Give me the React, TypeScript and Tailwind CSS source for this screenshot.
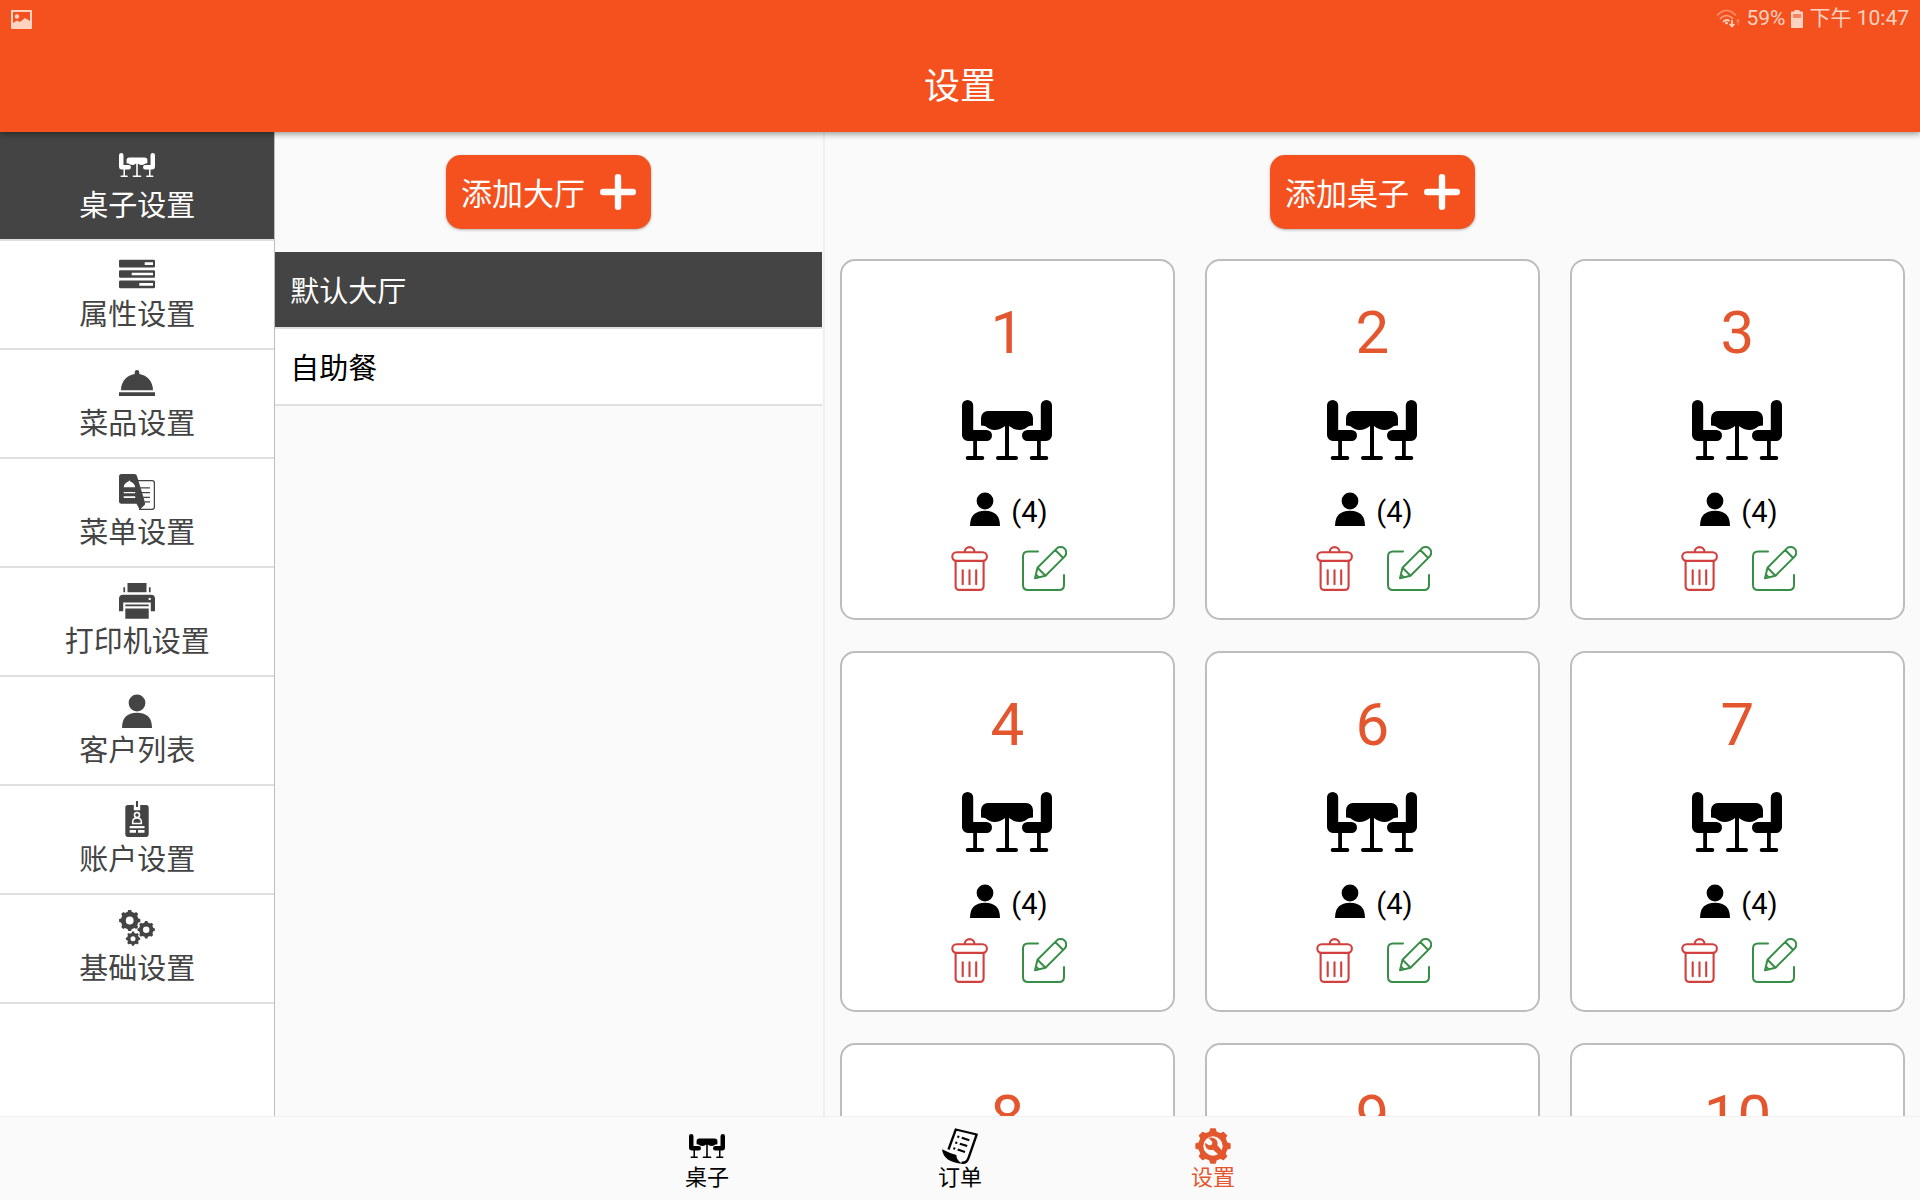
import { memo, useState } from "react";
import type { ReactNode } from "react";
import clsx from "clsx";

interface IconProps {
  className?: string;
}

const TableIcon = ({ className }: IconProps) => (
  <svg viewBox="0 0 90 90" fill="currentColor" className={className} aria-hidden="true">
    <path d="M0 20.5a5.6 5.6 0 0 1 11.2 0V45H24.500a5.500 5.500 0 0 1 0 11H6a6 6 0 0 1-6-6z" />
    <path d="M90 20.500a5.600 5.600 0 0 0-11.200 0V45H65.500a5.500 5.500 0 0 0 0 11H84a6 6 0 0 0 6-6z" />
    <path d="M26 26H64a7 7 0 0 1 7 7v7.500q-2.500 0-4.500.8q-4 3.700-9 3.700q-5.500 0-10.500-4V71h7a2 2 0 0 1 0 4H36a2 2 0 0 1 0-4h7V41q-5 4-10.500 4q-5 0-9-3.700q-2-.8-4.500-.8V33a7 7 0 0 1 7-7z" />
    <path d="M11.200 55h3.800v16h5.300a2 2 0 0 1 0 4H5.700a2 2 0 0 1 0-4h5.500z" />
    <path d="M78.800 55h-3.800v16h-5.300a2 2 0 0 0 0 4h14.600a2 2 0 0 0 0-4h-5.500z" />
  </svg>
);

const PropertyIcon = ({ className }: IconProps) => (
  <svg viewBox="0 0 36 36" fill="currentColor" fillRule="evenodd" className={className} aria-hidden="true">
    <path d="M1.200 3.700H34.800Q36 3.700 36 4.900V10.200Q36 11.400 34.800 11.400H1.200Q0 11.400 0 10.200V4.900Q0 3.700 1.200 3.700zM25.700 6.300V9H34V6.300z" />
    <path d="M1.200 14.200H34.800Q36 14.200 36 15.400V20.600Q36 21.800 34.800 21.800H1.200Q0 21.800 0 20.600V15.400Q0 14.200 1.200 14.200zM12.700 16.700V19.300H34V16.700z" />
    <path d="M1.200 24.600H34.800Q36 24.600 36 25.800V31.100Q36 32.300 34.800 32.300H1.200Q0 32.300 0 31.100V25.800Q0 24.600 1.200 24.600zM20.300 27.100V29.800H34V27.100z" />
  </svg>
);

const DishIcon = ({ className }: IconProps) => (
  <svg viewBox="0 0 36 36" fill="currentColor" className={className} aria-hidden="true">
    <path d="M2 25.300C2 16.500 8 10 15.700 9V7.300a2.300 2.300 0 1 1 4.600 0V9C28 10 34 16.500 34 25.300zM0 27.200H36V31H0z" />
  </svg>
);

const MenuIcon = ({ className }: IconProps) => (
  <svg viewBox="0 0 36 36" fill="currentColor" className={className} aria-hidden="true">
    <path d="M18 6.700H33Q35.400 6.700 35.400 9V33Q35.400 35.400 33 35.400H20M21 13.800H31M22 18.700H31M24 23.300H31M26 27.900H31" fill="none" stroke="currentColor" strokeWidth="1.300" />
    <path d="M2.500 0H15.500Q17.300 0 18 2L26 28.500V30.500L20.800 35.800L17.500 29.800H2.500Q0 29.800 0 27.300V2.500Q0 0 2.500 0z" />
    <path d="M4.700 13.300Q5 9 9.500 7.600Q10.400 5.600 11.300 7.600Q15.600 9 16.200 13.300zM4.700 17.900H16.200V19.300H4.700zM4.700 22.300H16.200V23.900H4.700z" fill="white" />
  </svg>
);

const PrinterIcon = ({ className }: IconProps) => (
  <svg viewBox="0 0 36 36" fill="currentColor" fillRule="evenodd" className={className} aria-hidden="true">
    <path d="M8.500 0H27.500V9.300H8.500zM4.400 4.300H6.100V9.300H4.400zM29.900 4.300H31.600V9.300H29.900z" />
    <path d="M4 11.700H32Q36 11.700 36 15.700V28.300H31.800V19.500H4.200V28.300H0V15.700Q0 11.700 4 11.700zM30.700 14.700a1.200 1.200 0 1 0 .01 0z" />
    <path d="M6.300 21.500H29.700V23.200H6.300zM6.300 25.600H29.700V35.800H6.300z" />
  </svg>
);

const PersonIcon = ({ className }: IconProps) => (
  <svg viewBox="0 0 36 36" fill="currentColor" className={className} aria-hidden="true">
    <circle cx="18" cy="11" r="8.400" />
    <path d="M3 36Q3 20.800 18 20.800T33 36z" />
  </svg>
);

const BadgeIcon = ({ className }: IconProps) => (
  <svg viewBox="0 0 36 36" fill="currentColor" className={className} aria-hidden="true">
    <path d="M9 4H14.800V9.200H21.200V4H27Q29.700 4 29.700 6.700V33Q29.700 36 27 36H9Q6.300 36 6.300 33V6.700Q6.300 4 9 4z" />
    <path d="M17 0H19V6H17z" />
    <circle cx="18" cy="14" r="2.500" fill="none" stroke="white" strokeWidth="1.600" />
    <path d="M13.700 22.500V20.500Q14 17 18 17T22.300 20.500V22.500z" fill="none" stroke="white" strokeWidth="1.600" />
    <path d="M10.700 25H25.500V27.200H10.700zM10.700 29H17V31.800H10.700zM19 29H25.500V31.800H19z" fill="white" />
  </svg>
);

const gearPath = (cx: number, cy: number, r: number, hole: number, root = 0.8, teeth = 8) => {
  const step = (Math.PI * 2) / teeth;
  const at = (angle: number, radius: number) =>
    `${(cx + Math.cos(angle) * radius).toFixed(2)} ${(cy + Math.sin(angle) * radius).toFixed(2)}`;
  const points: string[] = [];
  for (let i = 0; i < teeth; i++) {
    const a = i * step - Math.PI / 2;
    points.push(at(a - step * 0.29, r * root), at(a - step * 0.17, r), at(a + step * 0.17, r), at(a + step * 0.29, r * root));
  }
  return `M${points.join("L")}ZM${cx - hole} ${cy}a${hole} ${hole} 0 1 0 ${hole * 2} 0a${hole} ${hole} 0 1 0 ${-hole * 2} 0z`;
};

const GearsIcon = ({ className }: IconProps) => (
  <svg viewBox="0 0 36 36" fill="currentColor" fillRule="evenodd" className={className} aria-hidden="true">
    <path d={gearPath(10.7, 10.5, 10.7, 3.9, 0.83)} />
    <path d={gearPath(27.2, 19.7, 8.8, 3.2, 0.83)} />
    <path d={gearPath(14, 28.7, 7.2, 2.5, 0.83)} />
  </svg>
);

const OrderIcon = ({ className }: IconProps) => (
  <svg viewBox="0 0 36 36" fill="none" stroke="currentColor" strokeWidth="2.300" className={className} aria-hidden="true">
    <path d="M6.500 21.500L13.800 1.500L34.700 6.500L26.500 30Q24.500 35.500 19.500 34.600" strokeLinejoin="round" />
    <path d="M0 21.300Q7 25 14.300 27Q14.500 32.500 20.500 35.800Q1.500 34.500 0 21.300z" fill="currentColor" stroke="none" />
    <path d="M15.300 8.500l2 .6M19.800 9.800L27.300 12.200M13.300 14.400l2 .6M17.800 15.700L25.200 18.100M11.300 20.200l2 .6M15.700 21.500L23 23.900" strokeWidth="2.100" />
  </svg>
);

const SettingsIcon = ({ className }: IconProps) => (
  <svg viewBox="0 0 36 36" fill="currentColor" className={className} aria-hidden="true">
    <path d={gearPath(18, 18, 17.2, 10.3, 0.83)} fillRule="evenodd" stroke="currentColor" strokeWidth="1.200" strokeLinejoin="round" />
    <path d="M13.300 9.800Q19 8.300 21.700 12.200Q23.200 14.700 22.300 17.300L28 23.500L24.300 27.300L18 21.700Q14.500 22.700 11.800 20.500Q9.600 18.300 10.200 14.700L14.300 17.500L17 16.600L17.300 13.700z" />
  </svg>
);

const PlusIcon = ({ className }: IconProps) => (
  <svg viewBox="0 0 36 36" stroke="currentColor" strokeWidth="6.400" strokeLinecap="round" className={className} aria-hidden="true">
    <path d="M18 3.200V32.800M3.200 18H32.800" />
  </svg>
);

const TrashIcon = ({ className }: IconProps) => (
  <svg viewBox="0 0 45 45" fill="none" stroke="currentColor" strokeWidth="2.100" strokeLinecap="round" className={className} aria-hidden="true">
    <rect x="5.300" y="6.300" width="34.600" height="8.600" rx="4.300" />
    <path d="M17.700 6a4.900 4.900 0 0 1 9.800 0M8.600 15V40Q8.600 43.900 12.600 43.900H32.600Q36.600 43.900 36.600 40V15M15.700 24.300V38.300M22.500 24.300V38.300M29.200 24.300V38.300" />
  </svg>
);

const EditIcon = ({ className }: IconProps) => (
  <svg viewBox="0 0 45 45" fill="none" stroke="currentColor" strokeWidth="2" strokeLinecap="round" strokeLinejoin="round" className={className} aria-hidden="true">
    <path d="M16 5.600H6Q1 5.600 1 10.600V39Q1 44 6 44H37Q42 44 42 39V29" />
    <path d="M13 32.300L15.500 21.700L34.600 2.600a5.600 5.600 0 0 1 8 8L23.500 29.700zM15.500 21.700L23.500 29.700M33.300 4L41.200 12M14 28.500L16.800 31.400" />
  </svg>
);

const PictureIcon = ({ className }: IconProps) => (
  <svg viewBox="0 0 21 19" fill="currentColor" fillRule="evenodd" className={className} aria-hidden="true">
    <path d="M1 0H20Q21 0 21 1V18Q21 19 20 19H1Q0 19 0 18V1Q0 0 1 0zM2 2V13L6 10.500L9 12L14 8L19 11V2z" />
    <circle cx="6" cy="6.500" r="2.200" />
  </svg>
);

const WifiIcon = ({ className }: IconProps) => (
  <svg viewBox="0 0 24 20" fill="none" stroke="currentColor" strokeWidth="1.700" className={className} aria-hidden="true">
    <path d="M1 6.500Q10.500-3.500 20 6.500" opacity=".5" />
    <path d="M4 10Q10.500 3 17 10" opacity=".6" />
    <path d="M7 13Q10.500 9.500 13.500 12" />
    <circle cx="10.500" cy="14" r="1.400" fill="currentColor" stroke="none" />
    <path d="M16 11V17M13.700 15L16 17.500L18.300 15" />
    <path d="M22 16V11M20.500 12.500L22 10.500L23.500 12.500" opacity=".4" strokeWidth="1.200" />
  </svg>
);

const BatteryIcon = ({ className }: IconProps) => (
  <svg viewBox="0 0 12 18" fill="currentColor" className={className} aria-hidden="true">
    <path d="M3.500 0H8.500V1.500H11Q12 1.500 12 2.500V17Q12 18 11 18H1Q0 18 0 17V2.500Q0 1.500 1 1.500H3.500z" />
    <path d="M2 4H10V8H2z" fill="#f4511e" opacity=".6" />
  </svg>
);

interface MenuEntry {
  label: string;
  Icon: (props: IconProps) => ReactNode;
}

const settings: MenuEntry[] = [
  { label: "桌子设置", Icon: TableIcon },
  { label: "属性设置", Icon: PropertyIcon },
  { label: "菜品设置", Icon: DishIcon },
  { label: "菜单设置", Icon: MenuIcon },
  { label: "打印机设置", Icon: PrinterIcon },
  { label: "客户列表", Icon: PersonIcon },
  { label: "账户设置", Icon: BadgeIcon },
  { label: "基础设置", Icon: GearsIcon },
];

const tabs: MenuEntry[] = [
  { label: "桌子", Icon: TableIcon },
  { label: "订单", Icon: OrderIcon },
  { label: "设置", Icon: SettingsIcon },
];

const halls = ["默认大厅", "自助餐"];

const tables = [1, 2, 3, 4, 6, 7, 8, 9, 10].map((name) => ({ name, seats: 4 }));

const Header = () => (
  <header className="relative z-10 h-[132px] shrink-0 bg-[#f5511e] text-white shadow-[0_2px_6px_rgba(0,0,0,0.4)]">
    <div className="flex h-[38px] items-center justify-between px-[11px] font-[Roboto,'Noto_Sans_CJK_SC',sans-serif] text-[21px] text-[#ffd3c2]">
      <PictureIcon className="h-[19px] w-[21px]" />
      <div className="flex items-center gap-1.5">
        <WifiIcon className="h-5 w-6" />
        <span>59%</span>
        <BatteryIcon className="h-[18px] w-3" />
        <span>下午 10:47</span>
      </div>
    </div>
    <h1 className="flex h-[90px] items-center justify-center text-[36px]">设置</h1>
  </header>
);

const AddButton = ({ label }: { label: string }) => (
  <div className="flex h-[120px] shrink-0 items-center justify-center">
    <button className="flex h-[74px] items-center gap-[15px] rounded-[15px] bg-[#f5511e] px-[15px] text-[31px] text-white shadow-[0_1px_3px_rgba(0,0,0,0.3)]">
      {label}
      <PlusIcon className="size-9" />
    </button>
  </div>
);

interface TableCardProps {
  name: number;
  seats: number;
}

const TableCard = memo(({ name, seats }: TableCardProps) => (
  <article className="flex flex-col items-center rounded-[15px] border-2 border-[#bdbdbd] bg-white pt-[30px] pb-[27px] font-[Roboto,sans-serif]">
    <h2 className="text-[60px] leading-[84px] text-[#e4572e]">{name}</h2>
    <TableIcon className="mt-2.5 size-[90px]" />
    <p className="mt-[15px] flex h-9 gap-2 text-[29px] leading-[44px]">
      <PersonIcon className="size-9" />({seats})
    </p>
    <div className="mt-5 flex gap-[30px]">
      <button aria-label={`删除 ${name}`} className="text-[#d0403f]">
        <TrashIcon className="size-[45px]" />
      </button>
      <button aria-label={`编辑 ${name}`} className="text-[#388e47]">
        <EditIcon className="size-[45px]" />
      </button>
    </div>
  </article>
));

export default function App() {
  const [section, setSection] = useState("桌子设置");
  const [hall, setHall] = useState("默认大厅");
  const [tab, setTab] = useState("设置");

  return (
    <div
      lang="zh-CN"
      className="flex h-screen flex-col overflow-hidden bg-[#fafafa] font-['Noto_Sans_CJK_SC',sans-serif] text-black"
    >
      <Header />

      <main className="grid min-h-0 flex-1 grid-cols-[1fr_2fr_4fr]">
        <nav className="overflow-hidden bg-white">
          {settings.map(({ label, Icon }) => (
            <button
              key={label}
              onClick={() => setSection(label)}
              className={clsx(
                "flex w-full flex-col items-center border-b-2 border-[#e0e0e0] py-[15px] text-[29px] leading-[41px]",
                section === label ? "bg-[#444444] text-white" : "text-[#444444]"
              )}
            >
              <Icon className="size-9" />
              {label}
            </button>
          ))}
        </nav>

        <section className="border-x border-l-[#bdbdbd] border-r-[#fafafa]">
          <AddButton label="添加大厅" />
          {halls.map((name) => (
            <button
              key={name}
              onClick={() => setHall(name)}
              className={clsx(
                "block w-full border-b-2 border-[#e0e0e0] px-[15px] text-left text-[29px] leading-[75px]",
                hall === name ? "bg-[#444444] text-white" : "bg-white"
              )}
            >
              {name}
            </button>
          ))}
        </section>

        <section className="flex min-h-0 flex-col border-l-2 border-[#efefef]">
          <AddButton label="添加桌子" />
          <div className="grid min-h-0 flex-1 grid-cols-3 content-start gap-x-[30px] gap-y-[31px] overflow-y-auto px-[15px] pt-[7px] [scrollbar-width:none]">
            {tables.map((table) => (
              <TableCard key={table.name} {...table} />
            ))}
          </div>
        </section>
      </main>

      <nav className="flex h-[84px] shrink-0 justify-center border-t border-[#f2f2f2]">
        {tabs.map(({ label, Icon }) => (
          <button
            key={label}
            onClick={() => setTab(label)}
            className={clsx(
              "flex w-[253px] flex-col items-center pt-[11px] text-[22px] leading-[22px]",
              tab === label && "text-[#e4572e]"
            )}
          >
            <Icon className="size-9" />
            {label}
          </button>
        ))}
      </nav>
    </div>
  );
}
